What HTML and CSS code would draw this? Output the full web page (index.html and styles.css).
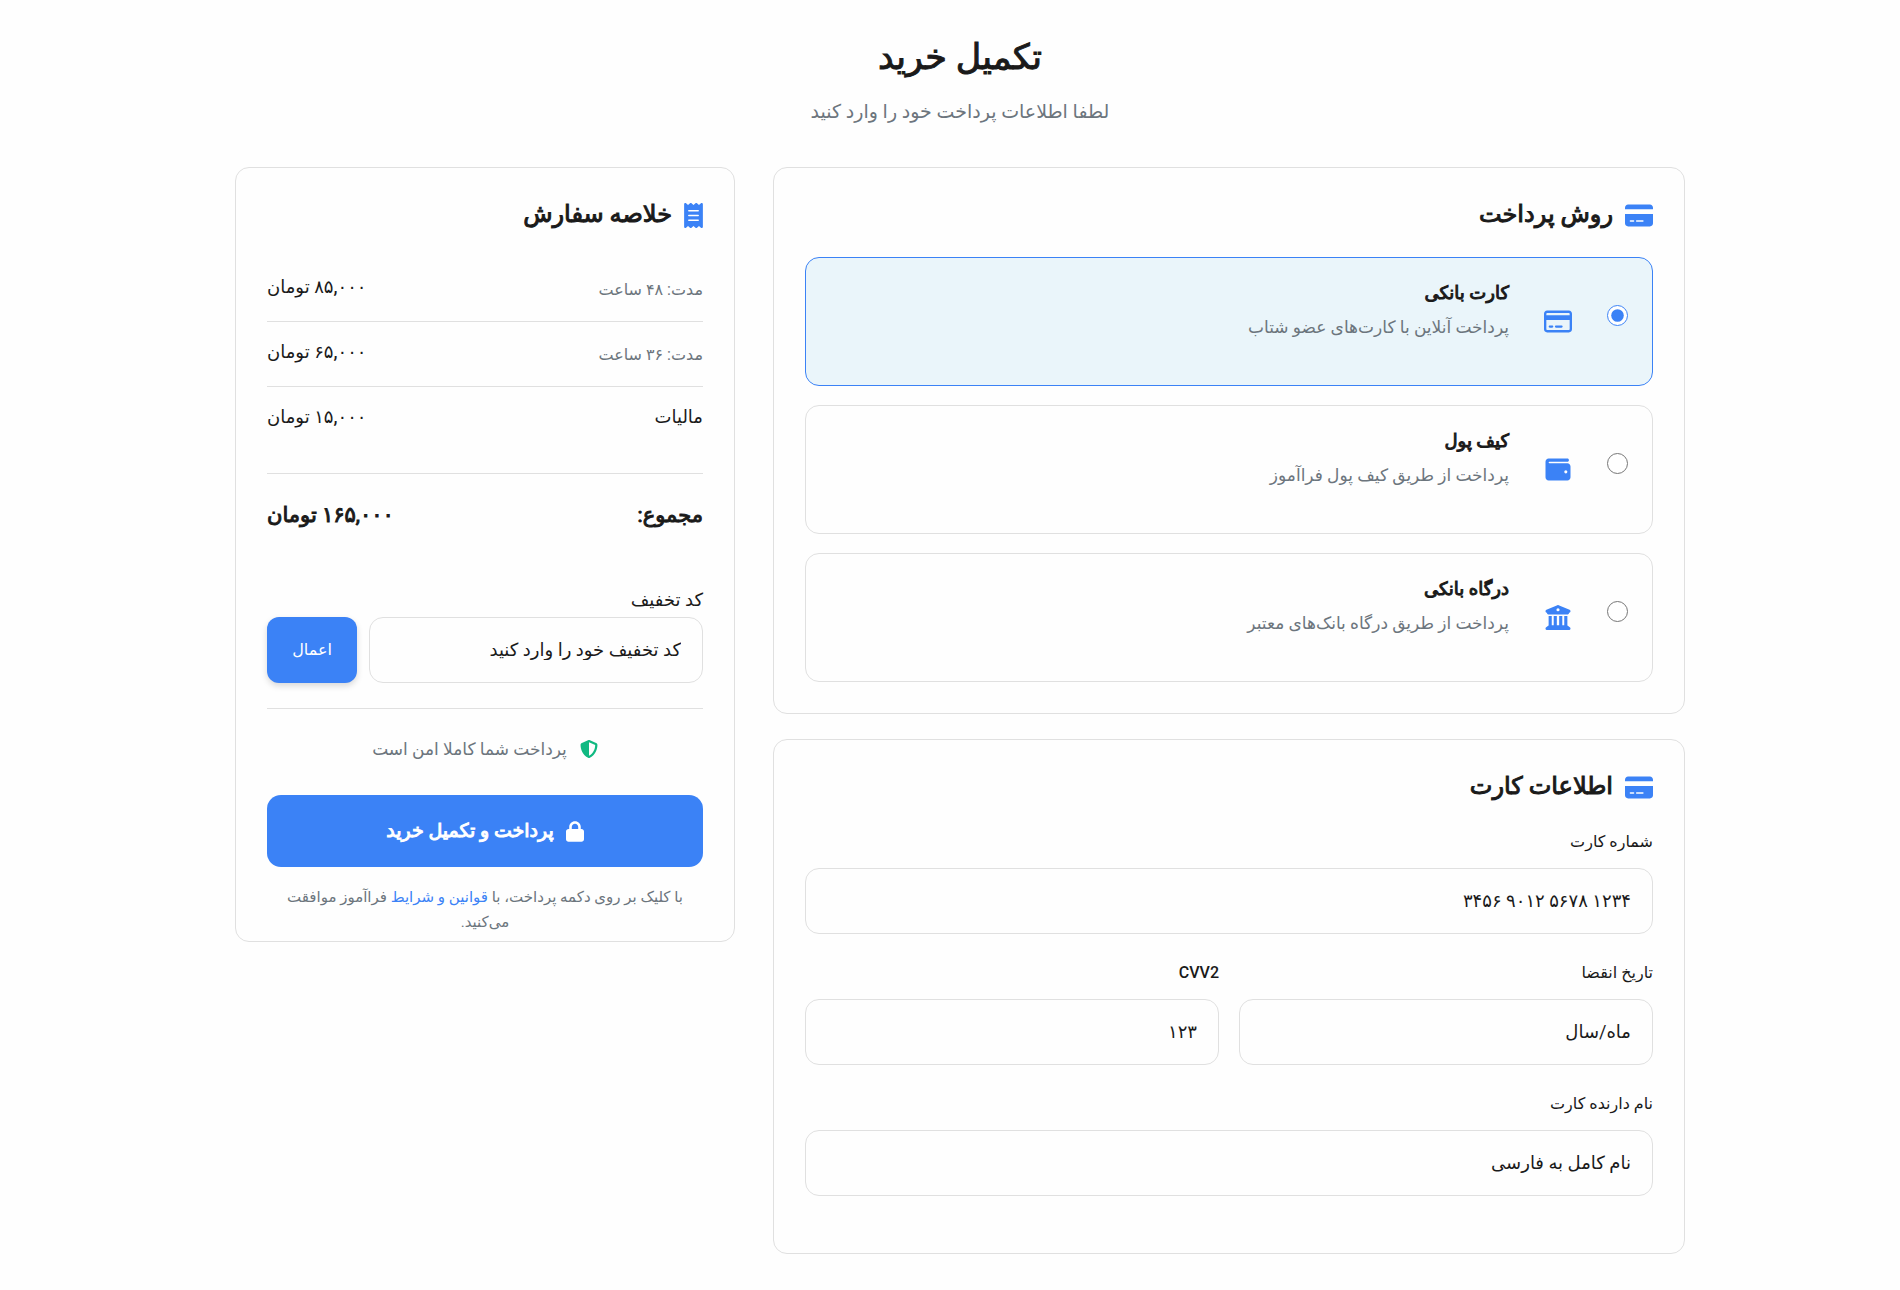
FILE: index.html
```html
<!DOCTYPE html>
<html lang="fa" dir="rtl">
<head>
<meta charset="utf-8">
<meta name="viewport" content="width=device-width, initial-scale=1">
<title>تکمیل خرید</title>
<link rel="stylesheet" href="styles.css">
</head>
<body>
<svg class="sprite" aria-hidden="true">
  <symbol id="card-solid" viewBox="0 0 576 512"><path d="M64 32C28.7 32 0 60.7 0 96v32H576V96c0-35.3-28.7-64-64-64H64zM576 224H0V416c0 35.3 28.7 64 64 64H512c35.3 0 64-28.7 64-64V224zM112 352h64c8.8 0 16 7.2 16 16s-7.2 16-16 16H112c-8.8 0-16-7.2-16-16s7.2-16 16-16zm112 16c0-8.8 7.2-16 16-16H368c8.8 0 16 7.2 16 16s-7.2 16-16 16H240c-8.8 0-16-7.2-16-16z"/></symbol>
</svg>
<main class="page">
  <header class="page-header">
    <h1 class="page-title">تکمیل خرید</h1>
    <p class="page-subtitle">لطفا اطلاعات پرداخت خود را وارد کنید</p>
  </header>

  <div class="checkout">
    <div class="column">
      <section class="card">
        <h2 class="card-title">
          <svg class="icon-wide" aria-hidden="true"><use href="#card-solid"/></svg>
          روش پرداخت
        </h2>
        <div class="options">
          <label class="option option-selected">
            <input class="option-radio" type="radio" name="method" checked>
            <svg class="icon-wide" viewBox="0 0 576 512" aria-hidden="true"><path d="M512 80c8.8 0 16 7.2 16 16v32H48V96c0-8.8 7.2-16 16-16H512zm16 144V416c0 8.8-7.2 16-16 16H64c-8.8 0-16-7.2-16-16V224H528zM64 32C28.7 32 0 60.7 0 96V416c0 35.3 28.7 64 64 64H512c35.3 0 64-28.7 64-64V96c0-35.3-28.7-64-64-64H64zm56 304c-13.3 0-24 10.7-24 24s10.7 24 24 24h48c13.3 0 24-10.7 24-24s-10.7-24-24-24H120zm128 0c-13.3 0-24 10.7-24 24s10.7 24 24 24H360c13.3 0 24-10.7 24-24s-10.7-24-24-24H248z"/></svg>
            <span class="option-text">
              <span class="option-name">کارت بانکی</span>
              <span class="option-note">پرداخت آنلاین با کارت‌های عضو شتاب</span>
            </span>
          </label>
          <label class="option">
            <input class="option-radio" type="radio" name="method">
            <svg class="icon-wide" viewBox="0 0 512 512" aria-hidden="true"><path d="M64 32C28.7 32 0 60.7 0 96V416c0 35.3 28.7 64 64 64H448c35.3 0 64-28.7 64-64V192c0-35.3-28.7-64-64-64H80c-8.8 0-16-7.2-16-16s7.2-16 16-16H448c17.7 0 32-14.3 32-32s-14.3-32-32-32H64zM416 272a32 32 0 1 1 0 64 32 32 0 1 1 0-64z"/></svg>
            <span class="option-text">
              <span class="option-name">کیف پول</span>
              <span class="option-note">پرداخت از طریق کیف پول فراآموز</span>
            </span>
          </label>
          <label class="option">
            <input class="option-radio" type="radio" name="method">
            <svg class="icon-wide" viewBox="0 0 512 512" aria-hidden="true"><path d="M243.4 2.6l-224 96c-14 6-21.8 21-18.7 35.8S16.8 160 32 160v8c0 13.3 10.7 24 24 24H456c13.3 0 24-10.7 24-24v-8c15.2 0 28.3-10.7 31.3-25.6s-4.8-29.9-18.7-35.8l-224-96c-8-3.4-17.2-3.4-25.2 0zM128 224H64V420.3c-.6 .3-1.2 .7-1.8 1.1l-48 32c-11.7 7.8-17 22.4-12.9 35.9S17.9 512 32 512H480c14.1 0 26.5-9.2 30.6-22.7s-1.1-28.1-12.9-35.9l-48-32c-.6-.4-1.2-.7-1.8-1.1V224H384V416H344V224H280V416H232V224H168V416H128V224zM256 64a32 32 0 1 1 0 64 32 32 0 1 1 0-64z"/></svg>
            <span class="option-text">
              <span class="option-name">درگاه بانکی</span>
              <span class="option-note">پرداخت از طریق درگاه بانک‌های معتبر</span>
            </span>
          </label>
        </div>
      </section>

      <section class="card">
        <h2 class="card-title">
          <svg class="icon-wide" aria-hidden="true"><use href="#card-solid"/></svg>
          اطلاعات کارت
        </h2>
        <div class="field">
          <label class="field-label" for="card-number">شماره کارت</label>
          <input class="text-input" id="card-number" type="text" placeholder="۱۲۳۴ ۵۶۷۸ ۹۰۱۲ ۳۴۵۶">
        </div>
        <div class="field-row">
          <div class="field">
            <label class="field-label" for="expiry">تاریخ انقضا</label>
            <input class="text-input" id="expiry" type="text" placeholder="ماه/سال">
          </div>
          <div class="field">
            <label class="field-label" for="cvv">CVV2</label>
            <input class="text-input" id="cvv" type="text" placeholder="۱۲۳">
          </div>
        </div>
        <div class="field">
          <label class="field-label" for="holder">نام دارنده کارت</label>
          <input class="text-input" id="holder" type="text" placeholder="نام کامل به فارسی">
        </div>
      </section>
    </div>

    <aside class="card summary">
      <h2 class="card-title">
        <svg class="icon-receipt" viewBox="0 0 384 512" aria-hidden="true"><path d="M14 2.2C22.5-1.7 32.5-.3 39.6 5.8L80 40.4 120.4 5.8c9-7.7 22.3-7.7 31.2 0L192 40.4 232.4 5.8c9-7.7 22.3-7.7 31.2 0L304 40.4 344.4 5.8c7.1-6.1 17.1-7.5 25.6-3.6s14 12.4 14 21.8V488c0 9.4-5.5 17.9-14 21.8s-18.5 2.5-25.6-3.6L304 471.6l-40.4 34.6c-9 7.7-22.3 7.7-31.2 0L192 471.6l-40.4 34.6c-9 7.7-22.3 7.7-31.2 0L80 471.6 39.6 506.2c-7.1 6.1-17.1 7.5-25.6 3.6S0 497.4 0 488V24C0 14.6 5.5 6.1 14 2.2zM96 144c-8.8 0-16 7.2-16 16s7.2 16 16 16H288c8.8 0 16-7.2 16-16s-7.2-16-16-16H96zM80 352c0 8.8 7.2 16 16 16H288c8.8 0 16-7.2 16-16s-7.2-16-16-16H96c-8.8 0-16 7.2-16 16zM96 240c-8.8 0-16 7.2-16 16s7.2 16 16 16H288c8.8 0 16-7.2 16-16s-7.2-16-16-16H96z"/></svg>
        خلاصه سفارش
      </h2>
      <ul class="lines">
        <li class="line"><span class="line-note">مدت: ۴۸ ساعت</span><span class="price">۸۵,۰۰۰ تومان</span></li>
        <li class="line"><span class="line-note">مدت: ۳۶ ساعت</span><span class="price">۶۵,۰۰۰ تومان</span></li>
        <li class="line"><span>مالیات</span><span class="price">۱۵,۰۰۰ تومان</span></li>
      </ul>
      <div class="total"><span>مجموع:</span><span>۱۶۵,۰۰۰ تومان</span></div>
      <form class="discount">
        <label class="discount-label" for="discount">کد تخفیف</label>
        <div class="discount-row">
          <input class="text-input" id="discount" type="text" placeholder="کد تخفیف خود را وارد کنید">
          <button class="apply" type="button">اعمال</button>
        </div>
      </form>
      <p class="secure">
        <svg class="icon-shield" viewBox="0 0 512 512" aria-hidden="true"><path d="M256 0c4.6 0 9.2 1 13.4 2.9L457.7 82.8c22 9.3 38.4 31 38.3 57.2c-.5 99.2-41.3 280.7-213.6 363.2c-16.7 8-36.1 8-52.8 0C57.3 420.7 16.5 239.2 16 140c-.1-26.2 16.3-47.9 38.3-57.2L242.7 2.9C246.8 1 251.4 0 256 0zm0 66.8V444.8C394 378 431.1 230.1 432 141.4L256 66.8z"/></svg>
        پرداخت شما کاملا امن است
      </p>
      <button class="pay" type="button">
        <svg class="icon-lock" viewBox="0 0 448 512" aria-hidden="true"><path d="M144 144v48H304V144c0-44.2-35.8-80-80-80s-80 35.8-80 80zM80 192V144C80 64.5 144.5 0 224 0s144 64.5 144 144v48h16c35.3 0 64 28.7 64 64V448c0 35.3-28.7 64-64 64H64c-35.3 0-64-28.7-64-64V256c0-35.3 28.7-64 64-64H80z"/></svg>
        <span class="pay-label">پرداخت و تکمیل خرید</span>
      </button>
      <p class="terms">با کلیک بر روی دکمه پرداخت، با <a class="terms-link" href="#terms">قوانین و شرایط</a> فراآموز موافقت می‌کنید.</p>
    </aside>
  </div>
</main>
</body>
</html>
```
FILE: styles.css
```css
:root {
  --blue: #3b82f6;
  --ink: #1a1a1a;
  --muted: #6c757d;
  --line: #e0e0e0;
}

*, *::before, *::after { box-sizing: border-box; }

body {
  margin: 0;
  padding: 33px 0 36px 20px;
  background: #fefefe;
  color: var(--ink);
  font-family: Roboto, "DejaVu Sans", sans-serif;
  font-size: 18px;
  line-height: 26px;
}

h1, h2, p, ul { margin: 0; padding: 0; }

input, button { font: inherit; }

svg { fill: currentColor; flex: none; }

.sprite { display: none; }

/* DejaVu has no semi-bold cut: a thin outline on the regular one stands in. */
.page-title,
.card-title,
.option-name,
.total,
.pay-label { font-weight: 400; -webkit-text-stroke: 1px currentColor; }

.page { max-width: 1450px; margin: 0 auto; }

.page-header { text-align: center; margin-bottom: 40px; }
.page-title { font-size: 35px; line-height: 50px; }
.page-subtitle { margin-top: 14px; font-size: 19px; line-height: 30px; color: var(--muted); }

.checkout {
  display: grid;
  grid-template-columns: minmax(0, 1fr) 500px;
  gap: 38px;
  align-items: start;
}

.column { display: grid; gap: 25px; }

.card {
  padding: 31px;
  border: 1px solid var(--line);
  border-radius: 14px;
}

.card-title {
  display: flex;
  align-items: center;
  gap: 12px;
  margin-bottom: 28px;
  font-size: 24px;
  line-height: 30px;
}

.card-title svg { margin-top: 3px; color: var(--blue); }

.icon-wide { width: 28px; height: 25px; color: var(--blue); }
.icon-receipt { width: 19px; height: 25px; }
.icon-shield { width: 18px; height: 18px; color: #10b981; }
.icon-lock { width: 18px; height: 21px; }

.options { display: grid; gap: 19px; }

.option {
  display: flex;
  align-items: center;
  gap: 35px;
  padding: 20px 24px;
  border: 1px solid var(--line);
  border-radius: 14px;
}

.option-selected { background: #eaf5fa; border-color: var(--blue); }

.option-radio {
  width: 21px;
  height: 21px;
  margin: 0 0 12px;
  accent-color: var(--blue);
}

.option-text { display: grid; gap: 4px; padding-bottom: 23px; line-height: 30px; }
.option-name { font-size: 18px; }
.option-note { font-size: 17px; color: var(--muted); }

.field { margin-bottom: 26px; }
.field-row { display: grid; grid-template-columns: 1fr 1fr; gap: 20px; }
.field-label { display: block; margin-bottom: 13px; font-size: 16px; font-weight: 500; }

.text-input {
  display: block;
  width: 100%;
  min-width: 0;
  padding: 19px 21px;
  border: 1px solid var(--line);
  border-radius: 14px;
  background: transparent;
  color: var(--ink);
  line-height: 26px;
}
.text-input::placeholder { color: var(--ink); opacity: 1; }

.summary { padding-bottom: 6px; }

.lines { list-style: none; margin-bottom: 22px; }

.line {
  display: flex;
  justify-content: space-between;
  align-items: flex-start;
  height: 64px;
  padding-top: 17px;
}
.line + .line { height: 65px; border-top: 1px solid var(--line); }
.line-note { font-size: 16px; line-height: 32px; color: var(--muted); }
.price { font-weight: 500; }

.total {
  display: flex;
  justify-content: space-between;
  padding: 26px 0 57px;
  border-top: 1px solid var(--line);
  font-size: 21px;
  line-height: 30px;
}

.discount { padding-bottom: 25px; border-bottom: 1px solid var(--line); }
.discount-label { display: block; margin-bottom: 4px; }
.discount-row { display: flex; gap: 12px; }

.apply {
  flex: none;
  width: 90px;
  border: 0;
  border-radius: 12px;
  background: var(--blue);
  color: #fff;
  font-size: 16px;
  font-weight: 500;
  box-shadow: 0 3px 6px rgba(0, 0, 0, 0.15);
}

.secure {
  display: flex;
  justify-content: center;
  align-items: center;
  gap: 13px;
  padding: 27px 0 33px;
  font-size: 17px;
  color: var(--muted);
}

.pay {
  display: flex;
  justify-content: center;
  align-items: center;
  gap: 12px;
  width: 100%;
  padding: 23px;
  border: 0;
  border-radius: 14px;
  background: var(--blue);
  color: #fff;
  font-size: 19px;
}

.terms {
  margin-top: 18px;
  font-size: 15px;
  line-height: 25px;
  text-align: center;
  color: var(--muted);
}
.terms-link { color: var(--blue); text-decoration: none; }
```
